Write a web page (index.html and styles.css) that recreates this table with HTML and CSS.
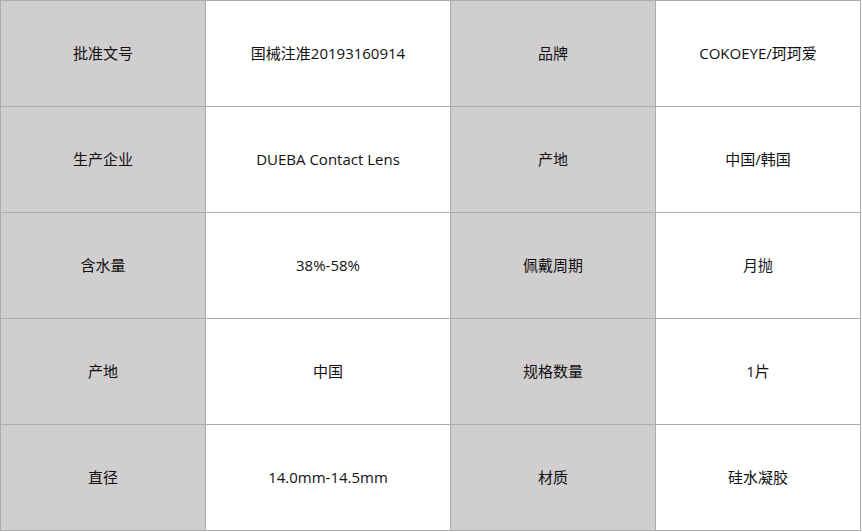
FILE: index.html
```html
<!DOCTYPE html>
<html lang="zh-CN">
<head>
<meta charset="utf-8">
<title>产品参数</title>
<link rel="stylesheet" href="styles.css">
</head>
<body>
<div class="spec">
  <div class="cell label">批准文号</div>
  <div class="cell value">国械注准20193160914</div>
  <div class="cell label">品牌</div>
  <div class="cell value">COKOEYE/珂珂爱</div>

  <div class="cell label">生产企业</div>
  <div class="cell value">DUEBA Contact Lens</div>
  <div class="cell label">产地</div>
  <div class="cell value">中国/韩国</div>

  <div class="cell label">含水量</div>
  <div class="cell value">38%-58%</div>
  <div class="cell label">佩戴周期</div>
  <div class="cell value">月抛</div>

  <div class="cell label">产地</div>
  <div class="cell value">中国</div>
  <div class="cell label">规格数量</div>
  <div class="cell value">1片</div>

  <div class="cell label">直径</div>
  <div class="cell value">14.0mm-14.5mm</div>
  <div class="cell label">材质</div>
  <div class="cell value">硅水凝胶</div>
</div>
</body>
</html>
```

FILE: styles.css
```css
html, body {
  margin: 0;
  padding: 0;
  background: #ffffff;
}

.spec {
  display: grid;
  grid-template-columns: 204px 244px 204px 204px;
  grid-auto-rows: 105px;
  gap: 1px;
  padding: 1px;
  width: max-content;
  background: #ababab;
  font-family: "Open Sans", "Noto Sans CJK SC", sans-serif;
  font-size: 15px;
  line-height: 1;
  color: #111111;
}

.cell {
  display: flex;
  align-items: center;
  justify-content: center;
  text-align: center;
  padding-bottom: 1px;
}

.label {
  background: #d0cece;
}

.value {
  background: #ffffff;
}
```
